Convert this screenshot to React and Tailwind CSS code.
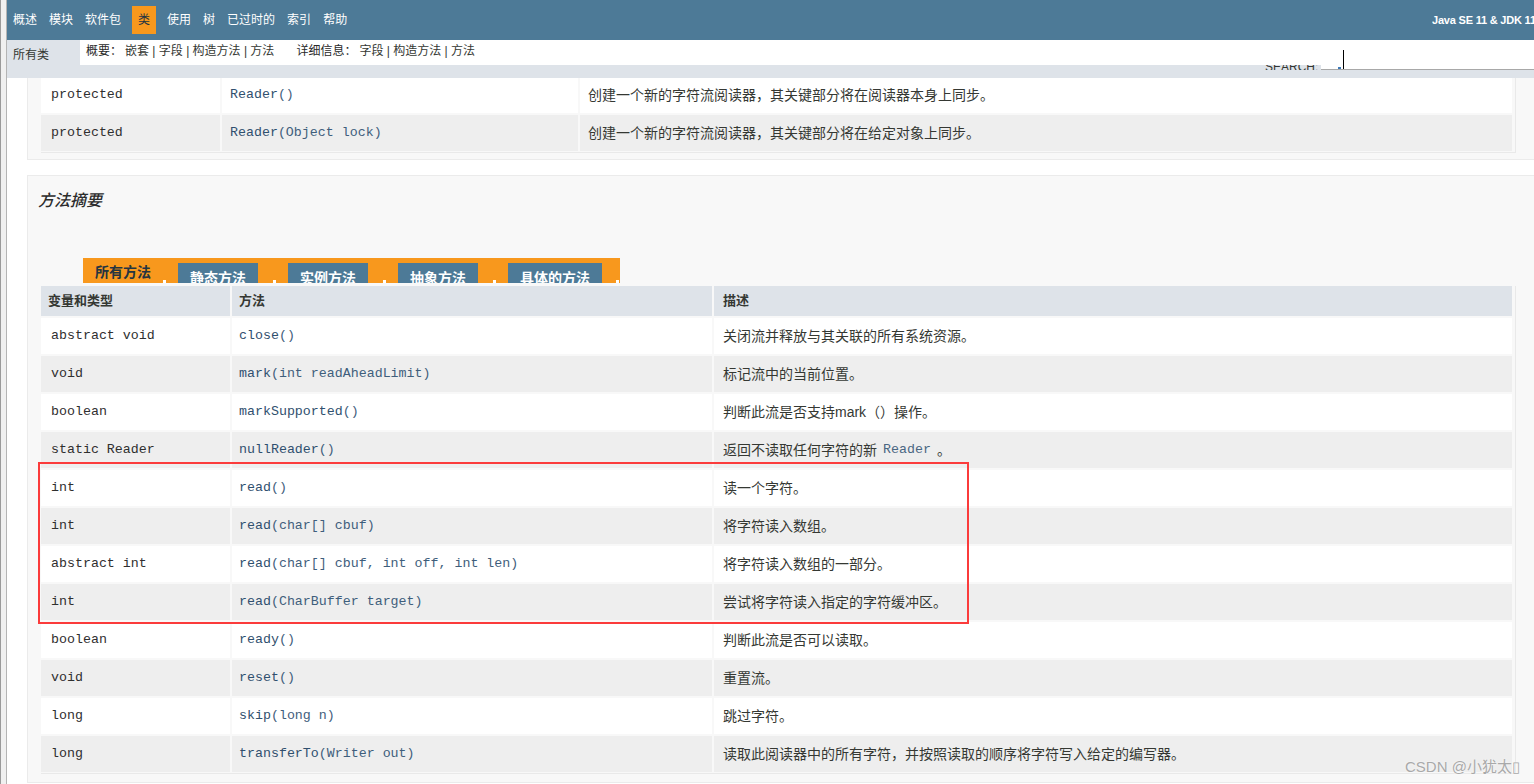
const SANS = "font-['Liberation_Sans','Noto_Sans_CJK_SC',sans-serif]";
const MONO = "font-['Liberation_Mono','Noto_Sans_CJK_SC',monospace]";

const NAV = ["概述", "模块", "软件包", "类", "使用", "树", "已过时的", "索引", "帮助"];

const CTORS = [
  ["Reader", "()", "创建一个新的字符流阅读器，其关键部分将在阅读器本身上同步。"],
  ["Reader", "(Object lock)", "创建一个新的字符流阅读器，其关键部分将在给定对象上同步。"],
];

const METHODS = [
  ["abstract void", "close", "()", "关闭流并释放与其关联的所有系统资源。"],
  ["void", "mark", "(int readAheadLimit)", "标记流中的当前位置。"],
  ["boolean", "markSupported", "()", "判断此流是否支持mark（）操作。"],
  ["static Reader", "nullReader", "()", "reader"],
  ["int", "read", "()", "读一个字符。"],
  ["int", "read", "(char[] cbuf)", "将字符读入数组。"],
  ["abstract int", "read", "(char[] cbuf, int off, int len)", "将字符读入数组的一部分。"],
  ["int", "read", "(CharBuffer target)", "尝试将字符读入指定的字符缓冲区。"],
  ["boolean", "ready", "()", "判断此流是否可以读取。"],
  ["void", "reset", "()", "重置流。"],
  ["long", "skip", "(long n)", "跳过字符。"],
  ["long", "transferTo", "(Writer out)", "读取此阅读器中的所有字符，并按照读取的顺序将字符写入给定的编写器。"],
];

const TABS = ["静态方法", "实例方法", "抽象方法", "具体的方法"];

function TabDot() {
  return <div className="w-[3px] h-[3px] bg-white shrink-0" />;
}

export default function App() {
  return (
    <div className={`relative w-[1534px] h-[784px] overflow-hidden flex bg-white text-[#353833] ${SANS}`}>
      {/* window frame */}
      <div className="w-[7px] shrink-0 h-full bg-[#f0f0f0] border-l border-l-[#9a9a9a] border-r border-r-[#b4b4b4]" />

      <div className="w-[1527px] shrink-0 flex flex-col">
        {/* top nav */}
        <div className="h-[40px] bg-[#4d7a97] flex items-center pl-[6px] overflow-hidden">
          <div className="flex items-center gap-[12px] text-[12px] text-white">
            {NAV.map((n) =>
              n === "类" ? (
                <span key={n} className="-mx-px h-[28px] px-[6px] flex items-center bg-[#f8981d] text-[#253441]">
                  {n}
                </span>
              ) : (
                <span key={n}>{n}</span>
              )
            )}
          </div>
          <span className="ml-auto w-[102px] shrink-0 whitespace-nowrap overflow-hidden text-[11px] tracking-[-0.2px] font-bold text-white">
            Java SE 11 &amp; JDK 11
          </span>
        </div>

        {/* sub nav */}
        <div className="h-[38px] bg-[#dee3e9] flex">
          <div className="w-[73px] pl-[6px] pt-[6px] text-[12px] text-[#353833]">所有类</div>
          <div className="flex-1 flex flex-col relative">
            <div className="h-[25px] bg-white pl-[6px] pt-[2px] text-[12px] flex items-start">
              <span className="text-[#2a2a2a]">概要：</span>
              <span className="ml-[3px]">嵌套 | 字段 | 构造方法 | 方法</span>
              <span className="ml-[22px] text-[#2a2a2a]">详细信息：</span>
              <span className="ml-[3px]">字段 | 构造方法 | 方法</span>
            </div>
            <div className="h-[13px] flex items-start">
              <div className="ml-[1185px] w-[56px] h-[5px] overflow-hidden">
                <div className="-mt-[7px] text-[12px] text-[#353833]">SEARCH:</div>
              </div>
              <div className="h-[5px] w-[213px] bg-white border-b border-[#a8a8a8] flex items-end">
                <span className="ml-[17px] w-[3px] h-[2px] bg-[#3d7ab8]" />
              </div>
            </div>
            <div className="absolute left-[1263px] top-[10px] w-px h-[19px] bg-black" />
          </div>
        </div>

        {/* content */}
        <div className="flex-1 overflow-hidden bg-white">
          {/* constructor summary (scrolled) */}
          <div className="ml-[20px] w-[1520px] -mt-px bg-[#f8f8f8] border-l border-b border-[#ebebeb] pl-[13px] pb-[6px]">
            <div className="w-[1475px] border-r border-b border-[#e9e9e9] pb-[1px]">
              <div className="w-[1471px] grid grid-cols-[179px_356px_1fr] gap-[2px]">
                {CTORS.map(([name, args, desc], i) => {
                  const bg = i % 2 === 0 ? "bg-white" : "bg-[#eeeeee]";
                  return [
                    <div key={i + "a"} className={`${bg} h-[36px] flex items-center pl-[10px] ${MONO} text-[13.3px] text-[#2f2f2f]`}>
                      protected
                    </div>,
                    <div key={i + "b"} className={`${bg} h-[36px] flex items-center pl-[8px] ${MONO} text-[13.3px] text-[#3f5e7c] whitespace-pre`}>
                      <span className="text-[#30506e]">{name}</span>
                      <span>{args}</span>
                    </div>,
                    <div key={i + "c"} className={`${bg} h-[36px] flex items-center pl-[8px] text-[14px]`}>
                      {desc}
                    </div>,
                  ];
                })}
              </div>
            </div>
          </div>

          {/* method summary */}
          <div className="ml-[20px] mt-[15px] w-[1520px] bg-[#f8f8f8] border border-[#ebebeb]">
            <h3 className="pl-[10px] pt-[15px] text-[16px] leading-[20px] italic font-medium text-[#2c2c2c]">方法摘要</h3>

            <div className="ml-[13px] mt-[47px]">
              {/* tabs */}
              <div className="ml-[42px] w-[537px] h-[25px] bg-[#f8981d] flex items-end">
                <div className="self-stretch px-[12px] pt-[7px] text-[14px] leading-[14px] font-bold text-[#253441] whitespace-nowrap">所有方法</div>
                <TabDot />
                {TABS.map((t, i) => (
                  <div key={t} className="flex items-end">
                    <div className="ml-[12px] h-[20px] px-[12px] pt-[8px] overflow-hidden bg-[#4d7a97] text-white text-[14px] leading-[14px] font-bold whitespace-nowrap">
                      {t}
                    </div>
                    <div className={i === TABS.length - 1 ? "ml-[14px]" : "ml-[15px]"}>
                      <TabDot />
                    </div>
                  </div>
                ))}
              </div>

              {/* table */}
              <div className="mt-[3px] w-[1475px] border-r border-b border-[#e9e9e9] pb-[1px]">
                <div className="w-[1471px] grid grid-cols-[189px_480px_1fr] gap-[2px]">
                  <div className="h-[30px] bg-[#dee3e9] flex items-center pl-[7px] text-[13px] font-bold">变量和类型</div>
                  <div className="h-[30px] bg-[#dee3e9] flex items-center pl-[7px] text-[13px] font-bold">方法</div>
                  <div className="h-[30px] bg-[#dee3e9] flex items-center pl-[9px] text-[13px] font-bold">描述</div>
                  {METHODS.map(([type, name, args, desc], i) => {
                    const bg = i % 2 === 0 ? "bg-white" : "bg-[#eeeeee]";
                    return [
                      <div key={i + "a"} className={`${bg} h-[36px] flex items-center pl-[10px] ${MONO} text-[13.3px] text-[#2f2f2f] whitespace-pre`}>
                        {type}
                      </div>,
                      <div key={i + "b"} className={`${bg} h-[36px] flex items-center pl-[7px] ${MONO} text-[13.3px] text-[#3f5e7c] whitespace-pre`}>
                        <span className="text-[#30506e]">{name}</span>
                        <span>{args}</span>
                      </div>,
                      <div key={i + "c"} className={`${bg} h-[36px] flex items-center pl-[9px] text-[14px] whitespace-pre`}>
                        {desc === "reader" ? (
                          <>
                            返回不读取任何字符的新
                            <span className={`mx-[6px] ${MONO} text-[13.3px] text-[#4a6782]`}>Reader</span>。
                          </>
                        ) : (
                          desc
                        )}
                      </div>,
                    ];
                  })}
                </div>
              </div>
            </div>
            <div className="h-[8px]" />
          </div>
        </div>
      </div>

      {/* annotation box */}
      <div className="absolute left-[38px] top-[462px] w-[931px] h-[162px] border-[2px] border-[#fb3b3b]" />

      {/* watermark */}
      <div className="absolute left-[1405px] top-[756px] text-[15px] text-[#a9a9a9] whitespace-nowrap [text-shadow:0_0_2px_#ffffff]">
        CSDN @小犹太▯
      </div>
    </div>
  );
}
